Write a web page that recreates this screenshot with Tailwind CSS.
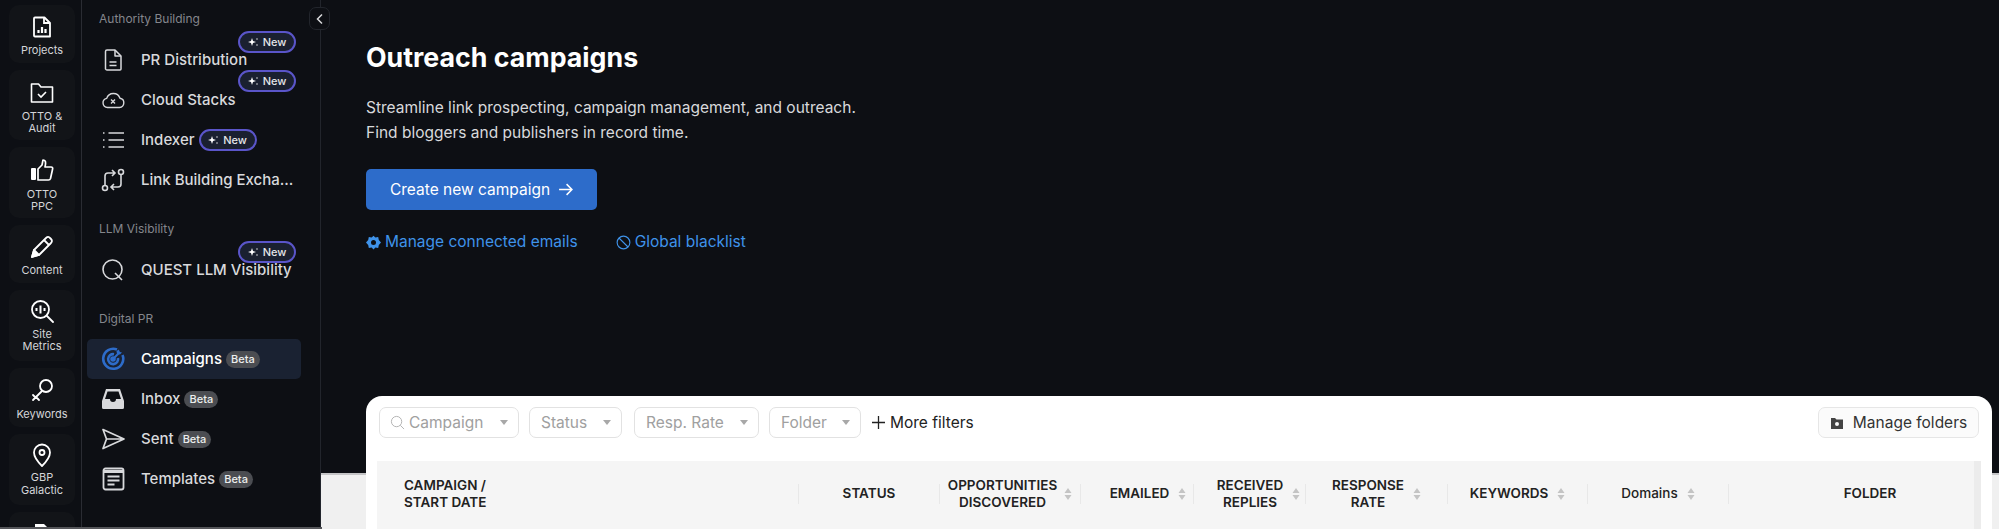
<!DOCTYPE html>
<html><head><meta charset="utf-8"><script src="https://cdn.jsdelivr.net/npm/@tailwindcss/browser@4"></script></head>
<body class="m-0 bg-[#0d0f14]">
<div class="flex w-[1999px] h-[529px] overflow-hidden bg-[#0d0f14] font-['Inter',sans-serif] relative">
 <div class="absolute left-0 bottom-0 w-[322px] h-[2px] bg-[#55565a] z-20"></div>
 <!-- rail -->
 <nav class="w-[82px] shrink-0 h-full border-r border-[#2a2c33] flex flex-col gap-[7px] pt-[5px] pl-[9px] text-[#d4d5d8] text-[11px] leading-[12px] text-center">
  <div class="w-[66px] h-[58px] shrink-0 rounded-[10px] bg-[#121418] flex flex-col items-center pt-[10px] gap-[5px]">
   <svg class="w-[24px] h-[24px]" viewBox="0 0 24 24" fill="none" stroke="#fff" stroke-width="1.8"><path d="M5 2.5h9.5L20 8v13.5H5a1 1 0 0 1-1-1v-17a1 1 0 0 1 1-1z" stroke-linejoin="round"/><path d="M14 2.5V8h6" /><path d="M8.5 18v-3M12 18v-6M15.5 18v-4" stroke-width="2.2"/></svg>
   <span>Projects</span></div>
  <div class="w-[66px] h-[70px] shrink-0 rounded-[10px] bg-[#121418] flex flex-col items-center pt-[11px] gap-[5px]">
   <svg class="w-[24px] h-[24px]" viewBox="0 0 24 24" fill="none" stroke="#fff" stroke-width="1.6"><path d="M1.500 3h7l2.500 3h11.500v15h-21z" stroke-linejoin="round"/><path d="M8 13l3 3 5-5"/></svg>
   <span>OTTO &amp;<br>Audit</span></div>
  <div class="w-[66px] h-[71px] shrink-0 rounded-[10px] bg-[#121418] flex flex-col items-center pt-[12px] gap-[5px]">
   <svg class="w-[24px] h-[24px]" viewBox="0 0 24 24" fill="none"><rect x="1" y="9" width="5" height="12" rx="1" fill="#fff"/><path d="M8 10l4-4 1-5c3 0 3 3 2 7h6c1.500 0 2 1 1.500 2.500l-2 9c-.3 1-1 1.500-2 1.500H8z" stroke="#fff" stroke-width="1.700" stroke-linejoin="round"/></svg>
   <span>OTTO<br>PPC</span></div>
  <div class="w-[66px] h-[58px] shrink-0 rounded-[10px] bg-[#121418] flex flex-col items-center pt-[10px] gap-[5px]">
   <svg class="w-[24px] h-[24px]" viewBox="0 0 24 24" fill="none" stroke="#fff" stroke-width="1.8" stroke-linejoin="round"><path d="M2 22l2-7L16 3c1.500-1.500 3-1.500 4 0l1 1c1.500 1.500 1 2.800 0 4L9 20z"/><path d="M14 5l5 5"/><path d="M2 22l2-7 5 5z" fill="#fff"/></svg>
   <span>Content</span></div>
  <div class="w-[66px] h-[71px] shrink-0 rounded-[10px] bg-[#121418] flex flex-col items-center pt-[9px] gap-[5px]">
   <svg class="w-[24px] h-[24px]" viewBox="0 0 24 24" fill="none" stroke="#fff" stroke-width="1.800"><circle cx="10.500" cy="10.500" r="8.500"/><path d="M17 17l6 6" stroke-linecap="round"/><path d="M6.500 9v3M10.500 6.500v8M14.500 9v3" stroke-width="2"/></svg>
   <span>Site<br>Metrics</span></div>
  <div class="w-[66px] h-[59px] shrink-0 rounded-[10px] bg-[#121418] flex flex-col items-center pt-[10px] gap-[6px]">
   <svg class="w-[24px] h-[24px]" viewBox="0 0 24 24" fill="none" stroke="#fff" stroke-width="1.800"><circle cx="16" cy="8" r="6"/><path d="M12 13L3 22M6 19l3 3M3 17l3 3" stroke-linecap="round"/></svg>
   <span>Keywords</span></div>
  <div class="w-[66px] h-[71px] shrink-0 rounded-[10px] bg-[#121418] flex flex-col items-center pt-[9px] gap-[4px] leading-[13px]">
   <svg class="w-[24px] h-[24px]" viewBox="0 0 24 24" fill="none" stroke="#fff" stroke-width="1.800"><path d="M12 23S4 15 4 9.500a8 8 0 0 1 16 0C20 15 12 23 12 23z" stroke-linejoin="round"/><circle cx="12" cy="9.500" r="2.500"/></svg>
   <span>GBP<br>Galactic</span></div>
  <div class="w-[66px] h-[60px] shrink-0 rounded-[10px] bg-[#121418] flex flex-col items-center pt-[10px]">
   <svg class="w-[24px] h-[24px]" viewBox="0 0 24 24" fill="#fff"><path d="M5 2h9l6 6v14H5z"/></svg></div>
 </nav>
 <!-- sidebar -->
 <aside class="w-[239px] shrink-0 h-full border-r border-[#22252c] relative text-[15px] text-[#d8d9dc] font-medium">
  <button class="absolute right-[-10px] top-[7px] w-[21px] h-[23px] rounded-[7px] border border-[#22252c] bg-[#0d0f14] flex items-center justify-center z-10">
   <svg class="w-[12px] h-[12px]" viewBox="0 0 12 12" fill="none" stroke="#d8d9dc" stroke-width="1.500"><path d="M8 1.500L3.500 6 8 10.500"/></svg></button>
  <div class="pl-[17px] pt-[11px] text-[12px] leading-[16px] text-[#84868c] font-normal">Authority Building</div>
  <div class="pt-[13px] flex flex-col">
   <div class="relative h-[40px] flex items-center pl-[19px] gap-[16px]">
    <svg class="w-[24px] h-[24px] shrink-0" viewBox="0 0 24 24" fill="none" stroke="#d8d9dc" stroke-width="1.500" stroke-linejoin="round"><path d="M6 2h8l6 6v13a1 1 0 0 1-1 1H6a2 2 0 0 1-1.500-1V3.500A1.500 1.500 0 0 1 6 2z"/><path d="M14 2v6h6M8.500 14h7M8.500 17.500h7"/></svg>
    <span class="whitespace-nowrap">PR Distribution</span>
    <span class="absolute left-[156px] top-[-9px] w-[58px] h-[22px] rounded-full border-2 border-[#5a55c9] bg-[#1a2030] flex items-center justify-center gap-[5px] text-[11px] font-medium text-[#e4e5e8]"><svg class="w-[10px] h-[10px]" viewBox="0 0 10 10" fill="#fff"><path d="M4 1l1 3 3 1-3 1-1 3-1-3-3-1 3-1z"/><circle cx="9" cy="2" r=".7"/><circle cx="9" cy="8" r=".7"/></svg>New</span>
   </div>
   <div class="relative h-[40px] flex items-center pl-[19px] gap-[16px]">
    <svg class="w-[24px] h-[24px] shrink-0" viewBox="0 0 24 24" fill="none" stroke="#d8d9dc" stroke-width="1.400" stroke-linejoin="round"><path d="M6.500 19.500a4.600 4.600 0 0 1-.8-9.100A7 7 0 0 1 19 10.200a4.700 4.700 0 0 1-.5 9.300z"/><path d="M10 11.500l4 4M14 11.500l-4 4"/></svg>
    <span>Cloud Stacks</span>
    <span class="absolute left-[156px] top-[-10px] w-[58px] h-[22px] rounded-full border-2 border-[#5a55c9] bg-[#1a2030] flex items-center justify-center gap-[5px] text-[11px] font-medium text-[#e4e5e8]"><svg class="w-[10px] h-[10px]" viewBox="0 0 10 10" fill="#fff"><path d="M4 1l1 3 3 1-3 1-1 3-1-3-3-1 3-1z"/><circle cx="9" cy="2" r=".7"/><circle cx="9" cy="8" r=".7"/></svg>New</span>
   </div>
   <div class="h-[40px] flex items-center pl-[19px] gap-[16px]">
    <svg class="w-[24px] h-[24px] shrink-0" viewBox="0 0 24 24" fill="none" stroke="#d8d9dc" stroke-width="1.600"><path d="M2 5h1.500M2 12h1.500M2 19h1.500M7.500 5H23M7.500 12H23M7.500 19H23"/></svg>
    <span>Indexer</span>
    <span class="ml-[-12px] w-[58px] h-[22px] rounded-full border-2 border-[#5a55c9] bg-[#1a2030] flex items-center justify-center gap-[5px] text-[11px] font-medium text-[#e4e5e8]"><svg class="w-[10px] h-[10px]" viewBox="0 0 10 10" fill="#fff"><path d="M4 1l1 3 3 1-3 1-1 3-1-3-3-1 3-1z"/><circle cx="9" cy="2" r=".7"/><circle cx="9" cy="8" r=".7"/></svg>New</span>
   </div>
   <div class="h-[40px] flex items-center pl-[19px] gap-[16px]">
    <svg class="w-[24px] h-[24px] shrink-0" viewBox="0 0 24 24" fill="none" stroke="#d8d9dc" stroke-width="1.600"><circle cx="4" cy="20" r="2.500"/><circle cx="20" cy="4" r="2.500"/><path d="M4 17.500V8a3 3 0 0 1 3-3h6M11 2l3 3-3 3M20 6.500V16a3 3 0 0 1-3 3h-6M13 16l-3 3 3 3"/></svg>
    <span class="whitespace-nowrap">Link Building Excha...</span>
   </div>
  </div>
  <div class="pl-[17px] pt-[21px] text-[12px] leading-[16px] text-[#84868c] font-normal">LLM Visibility</div>
  <div class="pt-[13px]">
   <div class="relative h-[40px] flex items-center pl-[19px] gap-[16px]">
    <svg class="w-[24px] h-[24px] shrink-0" viewBox="0 0 24 24" fill="none" stroke="#d8d9dc" stroke-width="1.600"><circle cx="11.500" cy="11.500" r="9.500"/><path d="M14 15l7 7"/></svg>
    <span class="whitespace-nowrap">QUEST LLM Visibility</span>
    <span class="absolute left-[156px] top-[-9px] w-[58px] h-[22px] rounded-full border-2 border-[#5a55c9] bg-[#1a2030] flex items-center justify-center gap-[5px] text-[11px] font-medium text-[#e4e5e8]"><svg class="w-[10px] h-[10px]" viewBox="0 0 10 10" fill="#fff"><path d="M4 1l1 3 3 1-3 1-1 3-1-3-3-1 3-1z"/><circle cx="9" cy="2" r=".7"/><circle cx="9" cy="8" r=".7"/></svg>New</span>
   </div>
  </div>
  <div class="pl-[17px] pt-[21px] text-[12px] leading-[16px] text-[#84868c] font-normal">Digital PR</div>
  <div class="pt-[12px] flex flex-col">
   <div class="h-[40px] w-[214px] ml-[5px] rounded-[5px] bg-[#1a2232] flex items-center pl-[14px] gap-[16px] text-white">
    <svg class="w-[24px] h-[24px] shrink-0" viewBox="0 0 24 24" fill="none" stroke="#2d6cca" stroke-width="2.600"><path d="M16 2.500A10 10 0 1 0 21.500 8"/><path d="M13 7.200A5 5 0 1 0 17 11"/><circle cx="12" cy="12" r="1.500" fill="#2d6cca"/><path d="M12 12l7-7" stroke-width="2"/><path d="M18 2.500l.5 2.500 2.500.5-2 2-3-.5-.5-3z" fill="#2d6cca" stroke="none"/></svg>
    <span class="flex items-center gap-[4px]">Campaigns<span class="h-[17px] px-[5px] rounded-full bg-[#4b4d52] text-[11px] leading-[17px] text-[#eceded]">Beta</span></span>
   </div>
   <div class="h-[40px] flex items-center pl-[19px] gap-[16px]">
    <svg class="w-[24px] h-[24px] shrink-0" viewBox="0 0 24 24" fill="#d8d9dc"><path d="M5 2h14l4 12v6.500a1.500 1.500 0 0 1-1.500 1.500h-19A1.500 1.500 0 0 1 1 20.500V14zM6.500 4.500L4 12h5a3 3 0 0 0 6 0h5l-2.500-7.500z" fill-rule="evenodd"/></svg>
    <span class="flex items-center gap-[4px]">Inbox<span class="h-[17px] px-[5px] rounded-full bg-[#4b4d52] text-[11px] leading-[17px] text-[#eceded]">Beta</span></span>
   </div>
   <div class="h-[40px] flex items-center pl-[19px] gap-[16px]">
    <svg class="w-[24px] h-[24px] shrink-0" viewBox="0 0 24 24" fill="none" stroke="#d8d9dc" stroke-width="1.700" stroke-linejoin="round"><path d="M2 2.500L23 12 2 21.500 5.500 12zM5.500 12H23"/></svg>
    <span class="flex items-center gap-[4px]">Sent<span class="h-[17px] px-[5px] rounded-full bg-[#4b4d52] text-[11px] leading-[17px] text-[#eceded]">Beta</span></span>
   </div>
   <div class="h-[40px] flex items-center pl-[19px] gap-[16px]">
    <svg class="w-[24px] h-[24px] shrink-0" viewBox="0 0 24 24" fill="none" stroke="#d8d9dc"><rect x="2.500" y="1.500" width="20" height="21" rx="2" stroke-width="1.800"/><path d="M2.500 4.500h20" stroke-width="3"/><path d="M6.500 9.500h12M6.500 13.500h12M6.500 17.500h7" stroke-width="1.800"/></svg>
    <span class="flex items-center gap-[4px]">Templates<span class="h-[17px] px-[5px] rounded-full bg-[#4b4d52] text-[11px] leading-[17px] text-[#eceded]">Beta</span></span>
   </div>
  </div>
 </aside>
 <!-- main -->
 <main class="flex-1 min-w-0 relative flex flex-col h-full">
  <div class="absolute left-0 right-0 top-[473px] bottom-0 bg-[#f0f0f0] border-t-2 border-[#c4c4c6]"></div>
  <div class="relative h-[396px] shrink-0 pl-[45px] pt-[38px]">
   <h1 class="text-[26.750px] leading-[38px] font-bold text-white m-0">Outreach campaigns</h1>
   <p class="mt-[19px] text-[15.500px] leading-[25px] text-[#d8d9dc] m-0">Streamline link prospecting, campaign management, and outreach.<br>Find bloggers and publishers in record time.</p>
   <button class="mt-[24px] w-[231px] h-[41px] rounded-[5px] bg-[#2d6cca] text-[15.500px] text-white flex items-center justify-center gap-[8px]">Create new campaign
    <svg class="w-[15px] h-[15px]" viewBox="0 0 14 14" fill="none" stroke="#fff" stroke-width="1.400"><path d="M1 7h12M8 2l5 5-5 5"/></svg></button>
   <div class="mt-[21px] flex items-center text-[15.500px] leading-[22px] text-[#3f93ea]">
    <svg class="w-[15px] h-[15px] mr-[4px]" viewBox="0 0 24 24" fill="#3f93ea"><path d="M12 1l3 3 4.500-.8L20.500 8 24 12l-3.500 4-1 4.800L15 20l-3 3-3-3-4.500.8-1-4.800L0 12l3.500-4 1-4.800L9 4zM12 8a4 4 0 1 0 0 8 4 4 0 0 0 0-8z" fill-rule="evenodd"/></svg>
    <span>Manage connected emails</span>
    <svg class="w-[15px] h-[15px] ml-[38px] mr-[4px]" viewBox="0 0 16 16" fill="none" stroke="#3f93ea" stroke-width="1.200"><circle cx="8" cy="8" r="6.800"/><path d="M3.200 3.200l9.600 9.600"/></svg>
    <span>Global blacklist</span>
   </div>
  </div>
  <section class="relative ml-[45px] w-[1626px] flex-1 bg-white rounded-t-[16px] px-[11px] pt-[11px] overflow-hidden">
   <div class="flex items-center h-[31px] px-[2px] text-[15.500px] text-[#a0a0a0] whitespace-nowrap">
    <div class="w-[140px] h-[31px] mr-[10px] rounded-[7px] border border-[#e2e2e2] flex items-center pl-[10px]"><svg class="w-[15px] h-[15px] mr-[4px]" viewBox="0 0 16 16" fill="none" stroke="#b0b0b0" stroke-width="1"><circle cx="7" cy="7" r="5.500"/><path d="M11 11l4 4"/></svg>Campaign<span class="ml-auto mr-[10px] w-0 h-0 border-x-[4px] border-x-transparent border-t-[5px] border-t-[#a8a8a8]"></span></div>
    <div class="w-[93px] h-[31px] mr-[12px] rounded-[7px] border border-[#e2e2e2] flex items-center pl-[11px]">Status<span class="ml-auto mr-[10px] w-0 h-0 border-x-[4px] border-x-transparent border-t-[5px] border-t-[#a8a8a8]"></span></div>
    <div class="w-[125px] h-[31px] mr-[10px] rounded-[7px] border border-[#e2e2e2] flex items-center pl-[11px]">Resp. Rate<span class="ml-auto mr-[10px] w-0 h-0 border-x-[4px] border-x-transparent border-t-[5px] border-t-[#a8a8a8]"></span></div>
    <div class="w-[92px] h-[31px] mr-[11px] rounded-[7px] border border-[#e2e2e2] flex items-center pl-[11px]">Folder<span class="ml-auto mr-[10px] w-0 h-0 border-x-[4px] border-x-transparent border-t-[5px] border-t-[#a8a8a8]"></span></div>
    <div class="flex items-center gap-[5px] text-[#222]"><svg class="w-[13px] h-[13px]" viewBox="0 0 12 12" stroke="#222" stroke-width="1.200"><path d="M6 0v12M0 6h12"/></svg>More filters</div>
    <div class="ml-auto h-[31px] w-[161px] rounded-[7px] border border-[#e6e6e6] bg-[#fbfbfb] flex items-center justify-center gap-[9px] text-[#333]"><svg class="w-[14px] h-[14px]" viewBox="0 0 14 14" fill="#444"><path d="M1 2h4l1.500 1.500H13V13H1zM7 6a2 2 0 1 0 0 4 2 2 0 0 0 0-4z" fill-rule="evenodd"/></svg>Manage folders</div>
   </div>
   <div class="mt-[23px] h-[68px] pb-[3px] relative flex items-center bg-[#f5f5f5] text-[13.500px] leading-[16.500px] font-semibold text-[#222] uppercase">
    <div class="w-[422px] pl-[27px] h-[20px] flex items-center border-r border-[#e8e8e8]"><span>Campaign /<br>Start Date</span></div>
    <div class="w-[141px] h-[20px] flex items-center justify-center border-r border-[#e8e8e8]">Status</div>
    <div class="w-[141px] h-[20px] flex items-center justify-center gap-[7px] border-r border-[#e8e8e8] text-center"><span class="whitespace-nowrap">Opportunities<br>Discovered</span><svg class="w-[8px] h-[14px]" viewBox="0 0 8 14" fill="#c4c4c4"><path d="M4 1l3.500 5h-7zM4 13L.5 8h7z"/></svg></div>
    <div class="w-[113px] h-[20px] pl-[22px] flex items-center justify-center gap-[9px] border-r border-[#e8e8e8]">Emailed<svg class="w-[8px] h-[14px]" viewBox="0 0 8 14" fill="#c4c4c4"><path d="M4 1l3.500 5h-7zM4 13L.5 8h7z"/></svg></div>
    <div class="w-[112px] h-[20px] pl-[18px] flex items-center justify-center gap-[9px] border-r border-[#e8e8e8] text-center"><span>Received<br>Replies</span><svg class="w-[8px] h-[14px]" viewBox="0 0 8 14" fill="#c4c4c4"><path d="M4 1l3.500 5h-7zM4 13L.5 8h7z"/></svg></div>
    <div class="w-[142px] h-[20px] flex items-center justify-center gap-[9px] border-r border-[#e8e8e8] text-center"><span>Response<br>Rate</span><svg class="w-[8px] h-[14px]" viewBox="0 0 8 14" fill="#c4c4c4"><path d="M4 1l3.500 5h-7zM4 13L.5 8h7z"/></svg></div>
    <div class="w-[140px] h-[20px] flex items-center justify-center gap-[9px] border-r border-[#e8e8e8]">Keywords<svg class="w-[8px] h-[14px]" viewBox="0 0 8 14" fill="#c4c4c4"><path d="M4 1l3.500 5h-7zM4 13L.5 8h7z"/></svg></div>
    <div class="w-[141px] h-[20px] flex items-center justify-center gap-[9px] border-r border-[#e8e8e8] normal-case font-medium">Domains<svg class="w-[8px] h-[14px]" viewBox="0 0 8 14" fill="#c4c4c4"><path d="M4 1l3.500 5h-7zM4 13L.5 8h7z"/></svg></div>
    <div class="flex-1 h-[20px] pl-[30px] flex items-center justify-center">Folder</div>
    <div class="absolute right-0 top-0 bottom-0 w-[7px] bg-[#ececec]"></div>
   </div>
  </section>
 </main>
</div>
</body></html>
